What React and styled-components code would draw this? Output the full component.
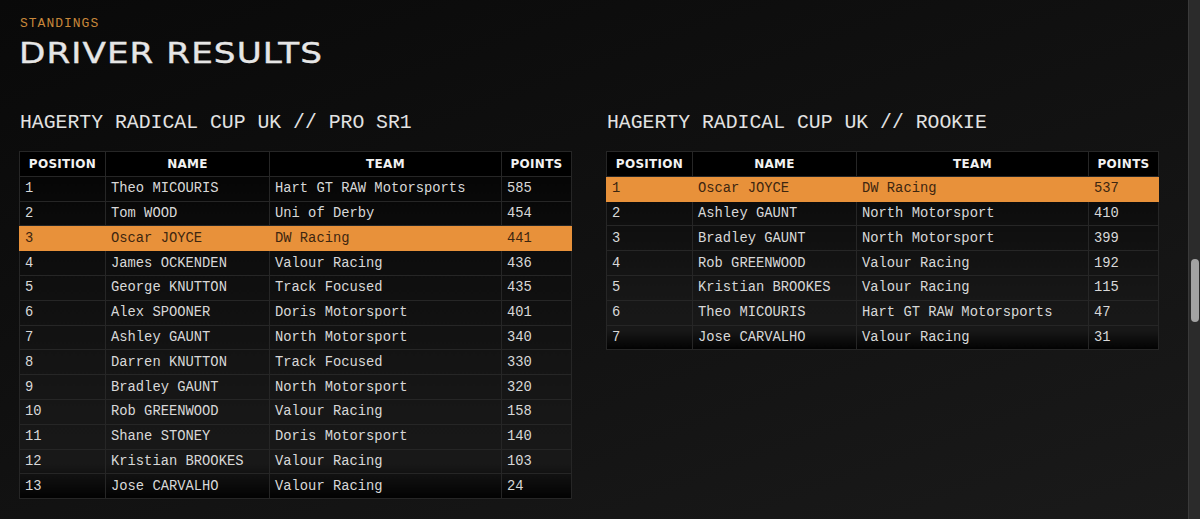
import React from "react";
import styled, { createGlobalStyle } from "styled-components";

const Global = createGlobalStyle`
  html, body { margin: 0; padding: 0; height: 100%; overflow: hidden; }
  body {
    background: linear-gradient(160deg, #090909 0%, #121212 55%, #1a1a1a 100%);
    font-family: "Liberation Mono", monospace;
    color: #d4d4d4;
  }
`;

const Page = styled.div`
  height: 519px;
  box-sizing: border-box;
  padding: 16px 42px 0 19px;
`;

const Eyebrow = styled.div`
  font-family: "Liberation Mono", monospace;
  font-size: 13px;
  letter-spacing: 1px;
  color: #c8873a;
  line-height: 16px;
  margin-left: 1px;
`;

const Title = styled.h1`
  width: fit-content;
  margin: 4px 0 0 0;
  font-family: "DejaVu Sans", sans-serif;
  font-weight: 400;
  font-size: 29px;
  letter-spacing: 0.9px;
  line-height: 34px;
  color: #e6e6e6;
  transform: scaleX(1.18);
  transform-origin: left center;
  -webkit-text-stroke: 0.4px #e6e6e6;
`;

const Columns = styled.div`
  display: grid;
  grid-template-columns: 552px 552px;
  column-gap: 35px;
  margin-top: 41px;
`;

const Section = styled.section`
  display: flex;
  flex-direction: column;
`;

const SectionTitle = styled.h2`
  margin: 0 0 16px 1px;
  font-family: "Liberation Mono", monospace;
  font-weight: 400;
  font-size: 19.8px;
  line-height: 24px;
  color: #e2e2e2;
`;

const Table = styled.table`
  width: 552px;
  border-collapse: collapse;
  table-layout: fixed;
  border: 1px solid #2a2a2a;
  background: linear-gradient(180deg, #030303 0%, #0c0c0c 25%, #171717 75%, #181818 90%, #020202 100%);
`;

const Col = styled.col`
  width: ${(p) => p.$w}px;
`;

const HeadRow = styled.tr`
  height: 24.8px;
  background: #000;
`;

const Th = styled.th`
  font-family: "DejaVu Sans", sans-serif;
  font-weight: 700;
  font-size: 12px;
  letter-spacing: 0.3px;
  color: #f2f2f2;
  text-align: center;
  border: 1px solid #262626;
  padding: 0;
`;

const Row = styled.tr`
  height: 24.8px;
  background: ${(p) => (p.$hl ? "#e8913a" : "transparent")};
  color: ${(p) => (p.$hl ? "#3d2610" : "#d8d8d8")};
`;

const Td = styled.td`
  font-family: "Liberation Mono", monospace;
  font-size: 13.8px;
  padding: 0 5px;
  border: 1px solid ${(p) => (p.$hl ? "#e8913a" : "#262626")};
  white-space: nowrap;
  overflow: hidden;
`;

const Scrollbar = styled.div`
  position: fixed;
  top: 0;
  right: 0;
  width: 11px;
  height: 100%;
  background: #2b2b2b;
  border-left: 1px solid #3a3a3a;
`;

const Thumb = styled.div`
  position: absolute;
  left: 2px;
  top: 259px;
  width: 8px;
  height: 63px;
  border-radius: 4px;
  background: #a3a3a3;
`;

const COLS = [
  ["POSITION", 86],
  ["NAME", 164],
  ["TEAM", 232],
  ["POINTS", 70],
];

const pro = [
  ["Theo MICOURIS", "Hart GT RAW Motorsports", 585],
  ["Tom WOOD", "Uni of Derby", 454],
  ["Oscar JOYCE", "DW Racing", 441],
  ["James OCKENDEN", "Valour Racing", 436],
  ["George KNUTTON", "Track Focused", 435],
  ["Alex SPOONER", "Doris Motorsport", 401],
  ["Ashley GAUNT", "North Motorsport", 340],
  ["Darren KNUTTON", "Track Focused", 330],
  ["Bradley GAUNT", "North Motorsport", 320],
  ["Rob GREENWOOD", "Valour Racing", 158],
  ["Shane STONEY", "Doris Motorsport", 140],
  ["Kristian BROOKES", "Valour Racing", 103],
  ["Jose CARVALHO", "Valour Racing", 24],
];

const rookie = [
  ["Oscar JOYCE", "DW Racing", 537],
  ["Ashley GAUNT", "North Motorsport", 410],
  ["Bradley GAUNT", "North Motorsport", 399],
  ["Rob GREENWOOD", "Valour Racing", 192],
  ["Kristian BROOKES", "Valour Racing", 115],
  ["Theo MICOURIS", "Hart GT RAW Motorsports", 47],
  ["Jose CARVALHO", "Valour Racing", 31],
];

function Standings({ title, rows }) {
  return (
    <Section>
      <SectionTitle>{title}</SectionTitle>
      <Table>
        <colgroup>
          {COLS.map(([c, w]) => (
            <Col key={c} $w={w} />
          ))}
        </colgroup>
        <thead>
          <HeadRow>
            {COLS.map(([c]) => (
              <Th key={c}>{c}</Th>
            ))}
          </HeadRow>
        </thead>
        <tbody>
          {rows.map(([name, team, pts], i) => {
            const hl = name === "Oscar JOYCE";
            return (
              <Row key={name} $hl={hl}>
                <Td $hl={hl}>{i + 1}</Td>
                <Td $hl={hl}>{name}</Td>
                <Td $hl={hl}>{team}</Td>
                <Td $hl={hl}>{pts}</Td>
              </Row>
            );
          })}
        </tbody>
      </Table>
    </Section>
  );
}

export default function App() {
  return (
    <>
      <Global />
      <Page>
        <Eyebrow>STANDINGS</Eyebrow>
        <Title>DRIVER RESULTS</Title>
        <Columns>
          <Standings title="HAGERTY RADICAL CUP UK // PRO SR1" rows={pro} />
          <Standings title="HAGERTY RADICAL CUP UK // ROOKIE" rows={rookie} />
        </Columns>
      </Page>
      <Scrollbar>
        <Thumb />
      </Scrollbar>
    </>
  );
}
